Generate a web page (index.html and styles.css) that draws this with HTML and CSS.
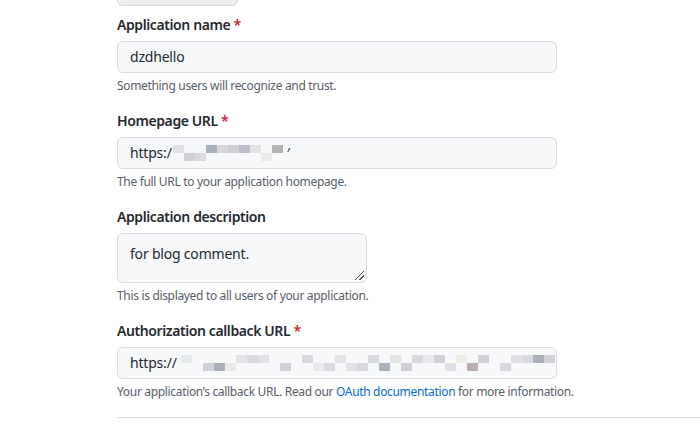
FILE: index.html
```html
<!DOCTYPE html>
<html lang="en">
<head>
<meta charset="utf-8">
<link rel="stylesheet" href="styles.css">
</head>
<body>
<div class="page">
  <div class="top-btn"></div>
  <form class="form">
    <div class="group">
      <label class="label">Application name <span class="req">*</span></label>
      <div class="input">dzdhello</div>
      <p class="note">Something users will recognize and trust.</p>
    </div>
    <div class="group">
      <label class="label">Homepage URL <span class="req">*</span></label>
      <div class="input">https:/<span class="mosaic m1">
          <span class="px a up"></span><span class="px b dn"></span><span class="px c dn"></span><span class="px d up"></span><span class="px e up"></span><span class="px f up"></span><span class="px g up"></span><span class="px h up"></span><span class="px i dn"></span><span class="px j up"></span>
        </span>′</div>
      <p class="note">The full URL to your application homepage.</p>
    </div>
    <div class="group">
      <label class="label">Application description</label>
      <div class="textarea">for blog comment.<span class="grip"></span></div>
      <p class="note">This is displayed to all users of your application.</p>
    </div>
    <div class="group">
      <label class="label">Authorization callback URL <span class="req">*</span></label>
      <div class="input">https://<span class="mosaic m2">
          <span class="px i up"></span><span class="px w up"></span><span class="px b dn"></span><span class="px d dn"></span><span class="px i dn"></span><span class="px h up"></span><span class="px c up"></span><span class="px a up"></span><span class="px w up"></span><span class="px b dn"></span><span class="px w up"></span><span class="px e up"></span><span class="px i dn"></span><span class="px c dn"></span><span class="px h up"></span><span class="px a dn"></span><span class="px e dn"></span><span class="px c up"></span><span class="px d dn"></span><span class="px h up"></span><span class="px f dn"></span><span class="px e up"></span><span class="px i up"></span><span class="px b up"></span><span class="px a dn"></span><span class="px k up"></span><span class="px l dn"></span><span class="px b up"></span><span class="px w up"></span><span class="px e dn"></span><span class="px a up"></span><span class="px c up"></span><span class="px d up"></span><span class="px b up"></span>
        </span></div>
      <p class="note">Your application’s callback URL. Read our <a class="link" href="#">OAuth documentation</a> for more information.</p>
    </div>
    <hr class="rule">
  </form>
</div>
</body>
</html>
```

FILE: styles.css
```css
* { box-sizing: border-box; }
html, body { margin: 0; padding: 0; background: #fff; }
body {
  font-family: "Noto Sans", "Segoe UI", "Liberation Sans", sans-serif;
  color: #24292f;
  overflow: hidden;
}
.page {
  padding-left: 117px;
}
.top-btn {
  width: 121px;
  height: 6px;
  background: #eeeff0;
  border: 1px solid #d8dadd;
  border-top: none;
  border-radius: 0 0 7px 7px;
}
.form { margin-top: 9px; }
.group { margin-bottom: 16px; }
.label {
  display: block;
  font-size: 14px;
  font-weight: 600;
  line-height: 20px;
  letter-spacing: -0.4px;
  margin-bottom: 6px;
}
.req { color: #cf222e; font-weight: 600; }
.input, .textarea {
  position: relative;
  display: flex;
  align-items: center;
  width: 440px;
  height: 32px;
  padding: 0 12px;
  font-size: 14px;
  line-height: 20px;
  letter-spacing: -0.2px;
  background: #f6f8fa;
  border: 1px solid #d8dde3;
  border-radius: 6px;
  color: #24292f;
  white-space: nowrap;
  overflow: hidden;
}
.textarea {
  width: 250px;
  height: 50px;
  align-items: flex-start;
  padding-top: 10px;
}
.grip {
  position: absolute;
  right: 2px;
  bottom: 2px;
  width: 9px;
  height: 9px;
  background:
    linear-gradient(135deg, transparent 45%, #555 45%, #555 55%, transparent 55%, transparent 70%, #555 70%, #555 80%, transparent 80%);
}
.note {
  margin: 4px 0 0;
  font-size: 12px;
  line-height: 18px;
  letter-spacing: -0.33px;
  color: #57606a;
}
.link { color: #0969da; text-decoration: none; }
.mosaic {
  display: inline-flex;
  align-items: flex-start;
  height: 16px;
}
.px {
  display: inline-block;
  width: 11px;
  height: 8px;
  flex: none;
}
.px.up { margin-top: 0; }
.px.dn { margin-top: 8px; }
.m1 { margin-left: 1px; margin-right: 4px; }
.m2 { margin-left: 4px; }
.a { background: #dfe1e4; }
.b { background: #cfd1d6; }
.c { background: #d9dadd; }
.d { background: #a9b1ba; }
.e { background: #d6d8dc; }
.f { background: #cdced6; }
.g { background: #c0bccb; }
.h { background: #e2e3e5; }
.i { background: #e8e9eb; }
.j { background: #b3b3b3; }
.k { background: #f1ece6; }
.l { background: #b9adae; }
.w { background: transparent; }
.rule {
  margin: 0;
  border: 0;
  border-top: 1px solid #d8dee4;
  height: 0;
}
```
